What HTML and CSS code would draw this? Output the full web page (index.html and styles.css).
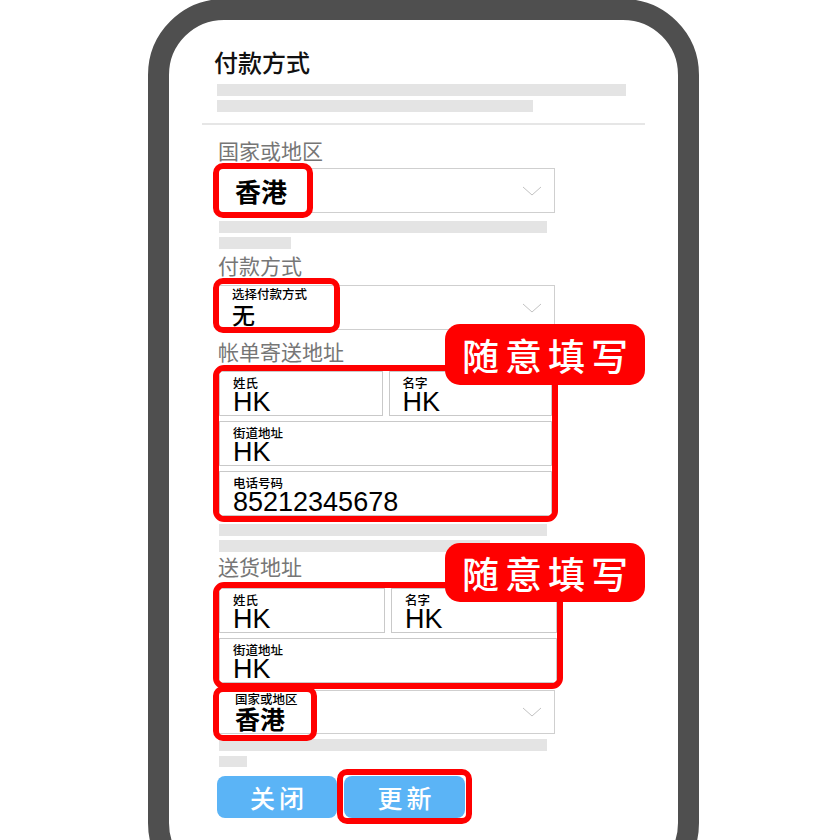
FILE: index.html
```html
<!DOCTYPE html>
<html lang="zh-CN">
  <head>
    <meta charset="UTF-8" />
    <meta name="viewport" content="width=device-width, initial-scale=1.0" />
    <title>付款方式</title>
    <link rel="stylesheet" href="styles.css">
  </head>
  <body>
    <div class="phone">
      <div class="phone__screen">
        <h2 class="payment__title">付款方式</h2>
        <div class="payment__bar payment__bar--head-long"></div>
        <div class="payment__bar payment__bar--head-short"></div>
        <div class="payment__divider"></div>

        <!-- Country -->
        <p class="payment__label payment__label--first">国家或地区</p>
        <div class="payment__select payment__select--country">
          <span class="payment__select-value">香港</span>
          <svg class="payment__chevron" width="20" height="10" viewBox="0 0 20 10">
            <polyline points="1,1 10,9 19,1" fill="none" stroke="#c2c2c2" stroke-width="1" />
          </svg>
          <span class="payment__mark payment__mark--country"></span>
        </div>
        <div class="payment__bar payment__bar--long payment__bar--after-select"></div>
        <div class="payment__bar payment__bar--short-72"></div>

        <!-- Payment method -->
        <p class="payment__label payment__label--method">付款方式</p>
        <div class="payment__select payment__select--method">
          <div class="payment__select-stack">
            <span class="payment__select-caption">选择付款方式</span>
            <span class="payment__select-choice">无</span>
          </div>
          <svg class="payment__chevron" width="20" height="10" viewBox="0 0 20 10">
            <polyline points="1,1 10,9 19,1" fill="none" stroke="#c2c2c2" stroke-width="1" />
          </svg>
          <span class="payment__mark payment__mark--method"></span>
        </div>

        <!-- Billing address -->
        <p class="payment__label payment__label--billing">帐单寄送地址</p>
        <div class="payment__group payment__group--billing">
          <div class="payment__fields payment__fields--billing">
            <div class="payment__field">
              <span class="payment__field-label">姓氏</span>
              <span class="payment__field-value">HK</span>
            </div>
            <div class="payment__field">
              <span class="payment__field-label">名字</span>
              <span class="payment__field-value">HK</span>
            </div>
            <div class="payment__field payment__field--wide">
              <span class="payment__field-label">街道地址</span>
              <span class="payment__field-value">HK</span>
            </div>
            <div class="payment__field payment__field--wide">
              <span class="payment__field-label">电话号码</span>
              <span class="payment__field-value">85212345678</span>
            </div>
          </div>
          <span class="payment__tag payment__tag--billing">随意填写</span>
        </div>
        <div class="payment__bar payment__bar--long payment__bar--after-billing"></div>
        <div class="payment__bar payment__bar--short-271"></div>

        <!-- Shipping address -->
        <p class="payment__label payment__label--shipping">送货地址</p>
        <div class="payment__group payment__group--shipping">
          <div class="payment__fields payment__fields--shipping">
            <div class="payment__field">
              <span class="payment__field-label">姓氏</span>
              <span class="payment__field-value">HK</span>
            </div>
            <div class="payment__field">
              <span class="payment__field-label">名字</span>
              <span class="payment__field-value">HK</span>
            </div>
            <div class="payment__field payment__field--wide">
              <span class="payment__field-label">街道地址</span>
              <span class="payment__field-value">HK</span>
            </div>
          </div>
          <span class="payment__tag payment__tag--shipping">随意填写</span>
        </div>
        <div class="payment__select payment__select--region">
          <div class="payment__select-stack">
            <span class="payment__select-caption">国家或地区</span>
            <span class="payment__select-region">香港</span>
          </div>
          <svg class="payment__chevron" width="20" height="10" viewBox="0 0 20 10">
            <polyline points="1,1 10,9 19,1" fill="none" stroke="#c2c2c2" stroke-width="1" />
          </svg>
          <span class="payment__mark payment__mark--region"></span>
        </div>
        <div class="payment__bar payment__bar--long payment__bar--after-region"></div>
        <div class="payment__bar payment__bar--short-28"></div>

        <!-- Buttons -->
        <div class="payment__buttons">
          <button class="payment__button">关闭</button>
          <button class="payment__button payment__button--update">
            更新
            <span class="payment__mark payment__mark--update"></span>
          </button>
        </div>
      </div>
    </div>
  </body>
</html>
```

FILE: styles.css
```css
/* General Styles */
html,
body {
  margin: 0;
  padding: 0;
}

body {
  width: 840px;
  height: 840px;
  overflow: hidden;
  background-color: #fff;
  font-family: "Noto Sans CJK SC", sans-serif;
  color: #000;
}

h2,
p {
  margin: 0;
  padding: 0;
}

/* Phone frame */
.phone {
  box-sizing: border-box;
  width: 551px;
  height: 900px;
  margin: -1px 0 0 148px;
  border: 21px solid #4f4f4f;
  border-radius: 76px;
  background-color: #fff;
}

.phone__screen {
  padding-left: 49px;
}

/* Heading */
.payment__title {
  margin: 30px 0 0 -4px;
  font-size: 24px;
  line-height: 24px;
  font-weight: 500;
  color: #111;
}

/* Placeholder bars */
.payment__bar {
  height: 12px;
  margin-left: 1px;
  background-color: #e4e4e4;
}

.payment__bar--head-long {
  width: 409px;
  margin: 10px 0 0 -1px;
}

.payment__bar--head-short {
  width: 316px;
  margin: 4px 0 0 -1px;
}

.payment__bar--long {
  width: 328px;
}

.payment__bar--after-select {
  margin-top: 8px;
}

.payment__bar--short-72 {
  width: 72px;
  margin-top: 4px;
}

.payment__bar--after-billing {
  margin-top: 2px;
}

.payment__bar--short-271 {
  width: 271px;
  margin-top: 4px;
}

.payment__bar--after-region {
  margin-top: 5px;
}

.payment__bar--short-28 {
  width: 28px;
  height: 11px;
  margin-top: 5px;
}

.payment__divider {
  width: 443px;
  height: 2px;
  margin: 11px 0 0 -16px;
  background-color: #e6e6e6;
}

/* Labels */
.payment__label {
  font-size: 21px;
  line-height: 21px;
  color: #767676;
}

.payment__label--first {
  margin-top: 15px;
}

.payment__label--method {
  margin-top: 6px;
}

.payment__label--billing {
  margin-top: 11px;
}

.payment__label--shipping {
  margin-top: 4px;
}

/* Select boxes */
.payment__select {
  position: relative;
  box-sizing: border-box;
  width: 337px;
  height: 45px;
  border: 1px solid #cfcfcf;
  display: flex;
  align-items: center;
  justify-content: space-between;
  padding: 0 12px 0 16px;
}

.payment__select--country {
  margin-top: 7px;
}

.payment__select--method {
  margin-top: 9px;
  padding-left: 13px;
}

.payment__select--region {
  height: 44px;
  margin-top: 1px;
}

.payment__select-value {
  font-size: 26px;
  line-height: 26px;
  font-weight: 700;
}

.payment__select-stack {
  display: flex;
  flex-flow: column;
  align-self: flex-start;
  padding-top: 1px;
}

.payment__select-caption {
  font-size: 12.5px;
  line-height: 13px;
  font-weight: 500;
}

.payment__select-choice {
  margin-top: 3px;
  font-size: 23px;
  line-height: 23px;
  font-weight: 500;
}

.payment__select-region {
  margin-top: 1px;
  font-size: 25px;
  line-height: 25px;
  font-weight: 700;
}

.payment__chevron {
  display: block;
}

/* Red highlight frames */
.payment__mark {
  position: absolute;
  box-sizing: border-box;
  border: 6px solid #ff0000;
  border-radius: 10px;
  pointer-events: none;
}

.payment__mark--country {
  left: -6px;
  top: -6px;
  width: 100px;
  height: 55px;
}

.payment__mark--method {
  left: -6px;
  top: -8px;
  width: 127px;
  height: 55px;
}

.payment__mark--region {
  left: -6px;
  top: -5px;
  width: 104px;
  height: 55px;
}

.payment__mark--update {
  left: -7px;
  top: -7px;
  width: 135px;
  height: 55px;
}

/* Address groups */
.payment__group {
  position: relative;
  margin-left: -5px;
}

.payment__group--billing {
  margin-top: 3px;
}

.payment__group--shipping {
  margin-top: 5px;
}

.payment__fields {
  box-sizing: border-box;
  border: 6px solid #ff0000;
  border-radius: 11px;
  overflow: hidden;
  display: grid;
  grid-template-columns: 1fr 1fr;
  gap: 5px 6px;
  background-color: #fff;
}

.payment__fields--billing {
  width: 345px;
}

.payment__fields--shipping {
  width: 350px;
}

.payment__field {
  box-sizing: border-box;
  height: 45px;
  border: 1px solid #c9c9c9;
  padding: 4px 13px 0;
  display: flex;
  flex-flow: column;
}

.payment__field--wide {
  grid-column: span 2;
}

.payment__field-label {
  font-size: 12.5px;
  line-height: 13px;
  font-weight: 500;
}

.payment__field-value {
  margin-top: 1px;
  font-family: "Liberation Sans", sans-serif;
  font-size: 27px;
  line-height: 24px;
}

/* Annotation tags */
.payment__tag {
  position: absolute;
  left: 232px;
  box-sizing: border-box;
  width: 200px;
  padding-left: 6px;
  display: flex;
  align-items: center;
  justify-content: center;
  background-color: #ff0000;
  border-radius: 15px;
  color: #fff;
  font-size: 37px;
  font-weight: 500;
  letter-spacing: 6px;
}

.payment__tag--billing {
  top: -41px;
  height: 61px;
}

.payment__tag--shipping {
  top: -39px;
  height: 59px;
}

/* Buttons */
.payment__buttons {
  display: flex;
  gap: 7px;
  margin: 9px 0 0 -1px;
}

.payment__button {
  position: relative;
  box-sizing: border-box;
  width: 120px;
  height: 42px;
  padding: 0 0 0 4px;
  border: none;
  border-radius: 8px;
  background-color: #5bb4f6;
  color: #fff;
  font-family: "Noto Sans CJK SC", sans-serif;
  font-size: 25px;
  font-weight: 500;
  letter-spacing: 4px;
  line-height: 42px;
}

.payment__button--update {
  width: 121px;
}
```
